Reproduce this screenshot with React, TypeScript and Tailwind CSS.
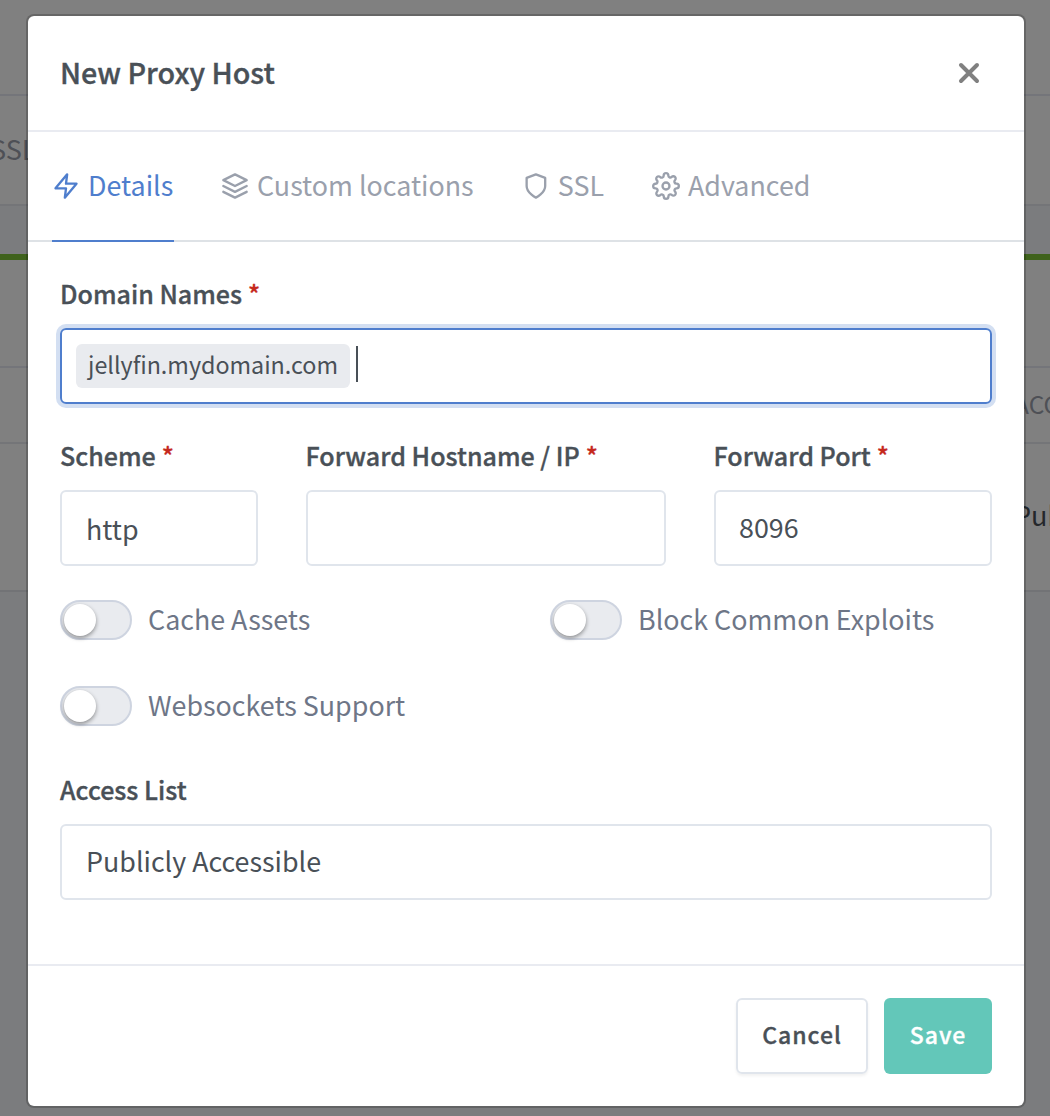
import type { ReactNode } from "react";
import { FiLayers, FiSettings, FiShield, FiZap } from "react-icons/fi";

function Backdrop() {
  return (
    <div className="absolute inset-0 flex flex-col bg-[#7b7c7e] text-[27px] leading-[44px]">
      <div className="h-24 border-b-2 border-[#74757a] bg-[#808080]" />
      <div className="h-[110px] overflow-hidden border-b-2 border-[#747578] bg-[#808080] pt-[31px] text-[#4e5056]">
        <div className="-ml-[10px]">SSL</div>
      </div>
      <div className="h-12" />
      <div className="h-1.5 bg-[#3f621c]" />
      <div className="h-[108px] border-b-2 border-[#74757a] bg-[#808080]" />
      <div className="flex h-[76px] justify-end overflow-hidden border-b-2 border-[#747578] bg-[#808080] pt-[14px] text-[24.5px] text-[#4e5056]">
        <div className="w-[36px] whitespace-nowrap">ACCESS</div>
      </div>
      <div className="flex h-[148px] justify-end overflow-hidden border-b-2 border-[#727376] bg-[#808080] pt-[49px] text-[#24272b]">
        <div className="w-[36px] whitespace-nowrap">Public</div>
      </div>
    </div>
  );
}

function Label({ children, required }: { children: ReactNode; required?: boolean }) {
  return (
    <div className="flex h-[42px] items-center gap-[6px] text-[25.05px] font-medium leading-[42px] whitespace-nowrap text-[#495057] [-webkit-text-stroke:0.35px]">
      {children}
      {required && <span className="text-[#c5281c]">*</span>}
    </div>
  );
}

function Toggle({ label }: { label: string }) {
  return (
    <div className="flex h-10 w-[490px] items-center gap-4">
      <div className="flex h-10 w-[72px] items-center rounded-full border-2 border-[#ced4e0] bg-[#e9ebef] pl-0.5">
        <div className="size-8 rounded-full bg-white shadow-[0_2px_4px_rgba(0,0,0,0.4)]" />
      </div>
      <span className="pb-0.5 text-[26.85px] leading-10 text-[#6e7687]">{label}</span>
    </div>
  );
}

const box = "flex h-[76px] items-center rounded-md border-2 border-[#e0e5ec] text-[26.85px] text-[#495057]";
const tab = "flex h-[110px] items-center gap-2 border-b-2 text-[26.85px] whitespace-nowrap";

export default function App() {
  return (
    <div className="relative h-[1116px] w-[1050px] overflow-hidden [font-family:'Noto_Sans_CJK_JP',sans-serif]">
      <Backdrop />
      <div className="absolute left-[26px] top-[14px] flex h-[1094px] w-[1000px] flex-col rounded-lg border-2 border-black/20 bg-white bg-clip-padding">
        <div className="flex flex-1 flex-col">
          <header className="flex h-[116px] items-center justify-between border-b-2 border-[#e9ebf1] pl-[32px] pr-[44px]">
            <h1 className="pb-0.5 text-[28.7px] font-medium text-[#495057] [-webkit-text-stroke:0.35px]">New Proxy Host</h1>
            <svg className="size-[22px]" viewBox="0 0 22 22" stroke="#808080" strokeWidth="4" strokeLinecap="round">
              <path d="M3 3L19 19M19 3L3 19" />
            </svg>
          </header>
          <nav className="flex h-[110px] gap-12 border-b-2 border-[#dee2e6] pl-6 text-[#9aa0ac]">
            <div className={`${tab} w-[122px] border-[#4f7ecd] text-[#4f7ecd]`}><FiZap size={28} /><span className="pb-0.5">Details</span></div>
            <div className={`${tab} w-[252px] border-transparent`}><FiLayers size={28} className="-ml-px shrink-0" /><span className="pb-0.5">Custom locations</span></div>
            <div className={`${tab} w-[82px] border-transparent`}><FiShield size={28} /><span className="pb-0.5">SSL</span></div>
            <div className={`${tab} border-transparent`}><FiSettings size={28} /><span className="pb-0.5">Advanced</span></div>
          </nav>
          <main className="flex h-[722px] flex-col px-8 pt-[30px]">
            <Label required>Domain Names</Label>
            <div className="mt-3.5 flex h-[76px] items-center rounded-md border-2 border-[#4f7ecd] pl-[14px] shadow-[0_0_0_4px_#d3dff2]">
              <span className="flex h-11 w-[274px] items-center rounded-md bg-[#e9ebef] pb-[3px] pl-3 text-[23.3px] text-[#495057]">jellyfin.mydomain.com</span>
              <span className="mb-1 ml-[6px] h-9 w-0.5 bg-[#495057]" />
            </div>
            <div className="mt-[30px] flex gap-12">
              <div className="flex w-[198px] flex-col gap-3.5">
                <Label required>Scheme</Label>
                <div className={`${box} pl-6 pt-0.5`}>http</div>
              </div>
              <div className="flex w-[360px] flex-col gap-3.5">
                <div className="-ml-[0.5px]"><Label required>Forward Hostname / IP</Label></div>
                <div className={box} />
              </div>
              <div className="flex w-[278px] flex-col gap-3.5">
                <div className="-ml-[0.5px]"><Label required>Forward Port</Label></div>
                <div className={`${box} pb-0.5 pl-[23px]`}>8096</div>
              </div>
            </div>
            <div className="mt-[34px] flex flex-wrap gap-y-[46px]">
              <div className="flex"><Toggle label="Cache Assets" /><div className="w-[400px]"><Toggle label="Block Common Exploits" /></div></div>
              <Toggle label="Websockets Support" />
            </div>
            <div className="mt-[42px] flex flex-col gap-3.5">
              <Label>Access List</Label>
              <div className={`${box} pb-0.5 pl-6`}>Publicly Accessible</div>
            </div>
          </main>
          <footer className="flex flex-1 justify-end gap-4 border-t-2 border-[#e9ebf1] px-8 pt-8 text-[23px] font-medium tracking-[1px] [-webkit-text-stroke:0.35px]">
            <button className="h-[76px] w-[132px] rounded-md border-2 border-[#e0e5ec] pb-[3px] text-[#495057] shadow-[0_2px_3px_rgba(0,0,0,0.06)]">Cancel</button>
            <button className="h-[76px] w-[108px] rounded-md bg-[#63c7b9] pb-[3px] text-white">Save</button>
          </footer>
        </div>
      </div>
    </div>
  );
}
